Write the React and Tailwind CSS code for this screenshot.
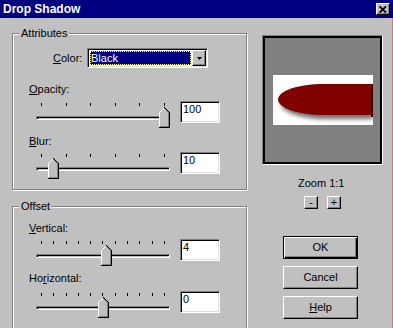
import React from "react";

const raised =
  "border border-t-white border-l-white border-r-black border-b-black shadow-[inset_-1px_-1px_0_#808080]";
const sunken =
  "border border-t-[#808080] border-l-[#808080] border-r-white border-b-white shadow-[inset_1px_1px_0_#000,inset_-1px_-1px_0_#dfdfdf]";

function Thumb({ left }) {
  return (
    <svg
      className="absolute top-[4px]"
      style={{ left }}
      width="11"
      height="21"
      viewBox="0 0 11 21"
      shapeRendering="crispEdges"
    >
      <polygon points="0,21 0,5 5.5,0 11,5 11,21" fill="#c0c0c0" />
      <polyline points="0.5,20 0.5,5.5 5.5,0.5" fill="none" stroke="#fff" />
      <polyline points="5.5,0.5 10.5,5.5 10.5,20.5 0,20.5" fill="none" stroke="#000" />
      <polyline points="5.5,1.5 9.5,5.5 9.5,19.5 1,19.5" fill="none" stroke="#808080" />
    </svg>
  );
}

function Slider({ ticks, pos }) {
  const left = Math.round(pos * 123);
  return (
    <div className="relative w-[134px] h-[26px]">
      <div className="flex justify-between px-[5px] h-[3px]">
        {Array.from({ length: ticks }).map((_, i) => (
          <div key={i} className="w-px h-[3px] bg-black" />
        ))}
      </div>
      <div className="mt-[10px] h-[4px] border border-t-[#808080] border-l-[#808080] border-r-white border-b-white shadow-[inset_1px_1px_0_#000]" />
      <Thumb left={left} />
    </div>
  );
}

function SliderRow({ ticks, pos, value, className }) {
  return (
    <div className={"flex items-start " + className}>
      <div className="ml-[23px] mt-[2px]">
        <Slider ticks={ticks} pos={pos} />
      </div>
      <div
        className={
          "ml-[10px] w-[40px] h-[22px] bg-white pl-[2px] pt-[1px] leading-[13px] " +
          sunken
        }
      >
        {value}
      </div>
    </div>
  );
}

function GroupBox({ title, className, children }) {
  return (
    <div
      className={
        "relative shrink-0 w-[235px] border border-[#808080] shadow-[inset_1px_1px_0_#fff,1px_1px_0_#fff] " +
        className
      }
    >
      <span className="absolute -top-[7px] left-[6px] px-[2px] bg-[#c0c0c0] leading-[13px]">
        {title}
      </span>
      {children}
    </div>
  );
}

function Combo() {
  return (
    <div className={"w-[121px] h-[20px] bg-white flex p-[1px] " + sunken}>
      <div className="flex-1 m-[1px] bg-[#000080] text-white pl-[1px] leading-[14px] outline-1 outline-dotted outline-[#ffff80] -outline-offset-1">
        Black
      </div>
      <div
        className={
          "w-[14px] h-full bg-[#c0c0c0] flex items-center justify-center " + raised
        }
      >
        <svg width="5" height="3" viewBox="0 0 5 3">
          <path d="M0 0h5L2.5 3z" fill="#000" />
        </svg>
      </div>
    </div>
  );
}

function Btn({ children, isDefault }) {
  return (
    <div
      className={
        isDefault
          ? "w-[75px] h-[23px] flex items-center justify-center border border-black shadow-[inset_1px_1px_0_#fff,inset_-1px_-1px_0_#000,inset_-2px_-2px_0_#808080]"
          : "w-[75px] h-[23px] flex items-center justify-center " + raised
      }
    >
      {children}
    </div>
  );
}

export default function App() {
  return (
    <div className="w-[393px] h-[328px] overflow-hidden bg-[#c0c0c0] flex flex-col text-[11px] leading-[13px] text-black font-['Liberation_Sans',Arial,sans-serif]">
      <div className="h-[18px] shrink-0 bg-[#000080] flex items-center justify-between pl-[3px] pr-[3px]">
        <span className="text-white font-bold text-[12px] leading-[18px]">
          Drop Shadow
        </span>
        <div
          className={
            "w-[14px] h-[12px] bg-[#c0c0c0] flex items-center justify-center " + raised
          }
        >
          <svg width="8" height="7" viewBox="0 0 8 7">
            <path
              d="M0.5 0.3L7 6.7M7 0.3L0.5 6.7"
              stroke="#000"
              strokeWidth="1.7"
            />
          </svg>
        </div>
      </div>

      <div className="flex flex-1 min-h-0 border-r border-r-[#c87c7c]">
        <div className="w-[247px] shrink-0 pl-[12px] pt-[15px] flex flex-col">
          <GroupBox title="Attributes" className="h-[157px]">
            <div className="flex items-center mt-[14px] ml-[40px]">
              <span className="w-[34px]">
                <span className="underline">C</span>olor:
              </span>
              <Combo />
            </div>
            <div className="mt-[15px] ml-[16px]">
              <span className="underline">O</span>pacity:
            </div>
            <SliderRow ticks={6} pos={1} value="100" className="mt-[5px]" />
            <div className="mt-[6px] ml-[16px]">
              <span className="underline">B</span>lur:
            </div>
            <SliderRow ticks={6} pos={0.1} value="10" className="mt-[4px]" />
          </GroupBox>

          <GroupBox title="Offset" className="h-[140px] mt-[16px]">
            <div className="mt-[15px] ml-[16px]">
              <span className="underline">V</span>ertical:
            </div>
            <SliderRow ticks={11} pos={0.53} value="4" className="mt-[4px]" />
            <div className="mt-[5px] ml-[16px]">
              Ho<span className="underline">r</span>izontal:
            </div>
            <SliderRow ticks={11} pos={0.5} value="0" className="mt-[6px]" />
          </GroupBox>
        </div>

        <div className="flex-1 pl-[15px] pt-[17px] flex flex-col">
          <div className="w-[121px] h-[130px] shrink-0 flex flex-col border border-t-[#808080] border-l-[#808080] border-r-white border-b-white">
            <div className="flex-1 border-2 border-black bg-[#808080] flex items-center justify-center">
              <div className="w-[100px] h-[50px] bg-white">
                <svg width="100" height="50" viewBox="0 0 100 50">
                  <defs>
                    <filter id="sh" x="-20%" y="-50%" width="140%" height="200%">
                      <feGaussianBlur stdDeviation="2.2" />
                    </filter>
                  </defs>
                  <path
                    d="M100 13 L53 13 C28 13 8 20 8 28.5 C8 37 28 44 53 44 L100 44 Z"
                    fill="#555"
                    opacity="0.85"
                    filter="url(#sh)"
                  />
                  <path
                    d="M100 9 L50 9 C25 9 5 16 5 24.5 C5 33 25 40 50 40 L100 40 Z"
                    fill="#800000"
                  />
                  <rect x="98" y="9" width="2" height="33" fill="#200000" />
                </svg>
              </div>
            </div>
          </div>
          <div className="mt-[12px] ml-[36px]">Zoom 1:1</div>
          <div className="mt-[6px] ml-[42px] flex gap-[9px]">
            <div className={"w-[14px] h-[13px] flex items-center justify-center leading-[11px] " + raised}>
              -
            </div>
            <div className={"w-[14px] h-[13px] flex items-center justify-center leading-[11px] " + raised}>
              +
            </div>
          </div>
          <div className="mt-[27px] ml-[21px] flex flex-col gap-[7px]">
            <Btn isDefault>OK</Btn>
            <Btn>Cancel</Btn>
            <Btn>
              <span>
                <span className="underline">H</span>elp
              </span>
            </Btn>
          </div>
        </div>
      </div>
    </div>
  );
}
